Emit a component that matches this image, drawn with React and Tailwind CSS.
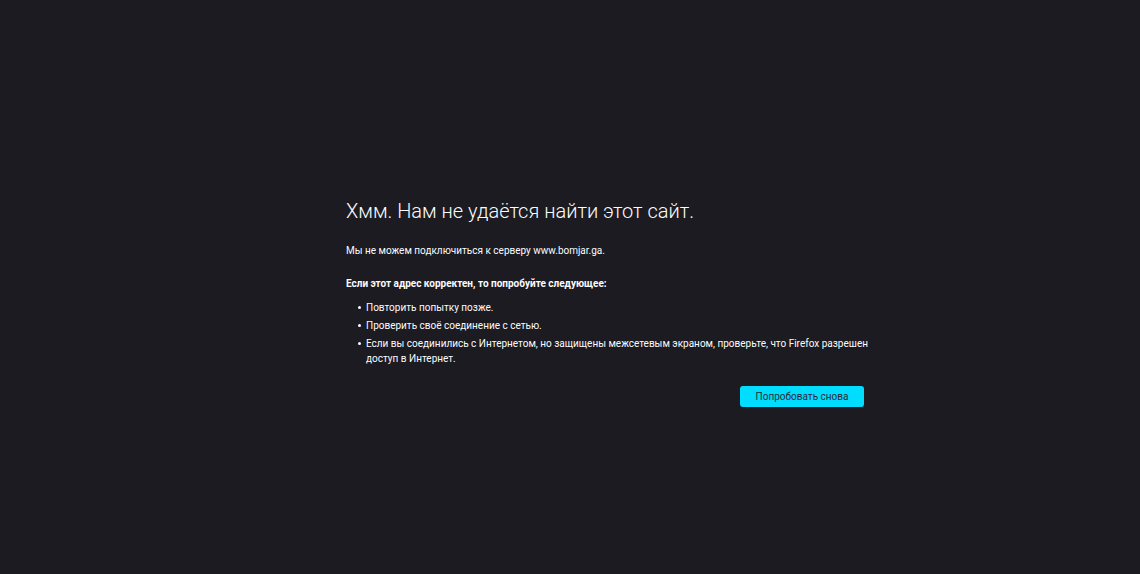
export default function App() {
  return (
    <div className="w-[1140px] h-[574px] bg-[#1c1b22] text-[#fbfbfe] overflow-hidden" style={{ fontFamily: 'Roboto, sans-serif' }}>
      <div className="ml-[346px] w-[518px] pt-[196px]">
        <h1 className="text-[20px] font-light leading-[30px] m-0">Хмм. Нам не удаётся найти этот сайт.</h1>
        <p className="text-[10px] leading-[15px] mt-[17px]">Мы не можем подключиться к серверу www.bomjar.ga.</p>
        <p className="text-[10px] leading-[15px] font-bold mt-[18px]">Если этот адрес корректен, то попробуйте следующее:</p>
        <ul className="text-[10px] leading-[15px] pl-[20px] mr-[-16px] mt-[9px]">
          {[
            'Повторить попытку позже.',
            'Проверить своё соединение с сетью.',
            'Если вы соединились с Интернетом, но защищены межсетевым экраном, проверьте, что Firefox разрешен доступ в Интернет.',
          ].map((t, i) => (
            <li key={i} className="relative mb-[3px] last:mb-0">
              <span className="absolute left-[-8px] top-[6px] w-[3px] h-[3px] rounded-full bg-[#fbfbfe]" />
              {t}
            </li>
          ))}
        </ul>
        <div className="flex justify-end mt-[20px]">
          <button className="w-[124px] h-[21px] rounded-[3px] bg-[#00ddff] text-[#2b2a33] text-[10px]">Попробовать снова</button>
        </div>
      </div>
    </div>
  );
}
